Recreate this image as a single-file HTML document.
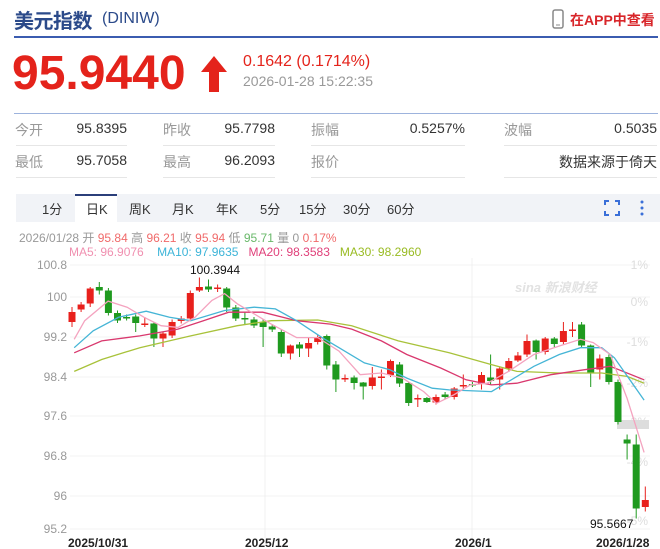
<!DOCTYPE html>
<html><head><meta charset="utf-8"><style>
body{margin:0;width:660px;height:549px;background:#fff;font-family:"Liberation Sans","Noto Sans CJK SC",sans-serif;position:relative;overflow:hidden}
.a{position:absolute;white-space:nowrap}
.ln{position:absolute;height:1px;background:#e6e6e6}
.lb{color:#999;font-size:14px}
.v{color:#333;font-size:14px;text-align:right}
</style></head><body>
<div class="a" style="left:14px;top:5px;font-size:20px;font-weight:bold;color:#2b4a8a;letter-spacing:-0.5px">美元指数</div>
<div class="a" style="left:102px;top:10px;font-size:16px;color:#2b4a8a">(DINIW)</div>
<svg class="a" style="left:552px;top:9px" width="12" height="20"><rect x="1" y="1" width="10" height="18" rx="2" fill="none" stroke="#888" stroke-width="1.5"/><line x1="4" y1="16" x2="8" y2="16" stroke="#888"/></svg>
<div class="a" style="left:570px;top:10px;font-size:14px;font-weight:bold;color:#d8262a">在APP中查看</div>
<div class="a" style="left:14px;top:36px;width:644px;height:2px;background:#3b5cb0"></div>
<div class="a" style="left:12px;top:46px;font-size:48px;font-weight:bold;color:#e4231b">95.9440</div>
<svg class="a" style="left:200px;top:55px" width="28" height="38"><polygon points="14,1 27,17 19,17 19,37 9,37 9,17 1,17" fill="#e4231b"/></svg>
<div class="a" style="left:243px;top:53px;font-size:16px;color:#e4231b">0.1642 (0.1714%)</div>
<div class="a" style="left:243px;top:73px;font-size:14px;color:#999">2026-01-28 15:22:35</div>
<div class="a" style="left:14px;top:113px;width:644px;height:1px;background:#9db3dd"></div>
<div class="a lb" style="left:15px;top:120px">今开</div><div class="a v" style="left:60px;width:67px;top:120px">95.8395</div>
<div class="a lb" style="left:163px;top:120px">昨收</div><div class="a v" style="left:205px;width:70px;top:120px">95.7798</div>
<div class="a lb" style="left:311px;top:120px">振幅</div><div class="a v" style="left:380px;width:85px;top:120px">0.5257%</div>
<div class="a lb" style="left:504px;top:120px">波幅</div><div class="a v" style="left:570px;width:87px;top:120px">0.5035</div>
<div class="ln" style="left:16px;width:111px;top:145px"></div><div class="ln" style="left:163px;width:112px;top:145px"></div><div class="ln" style="left:311px;width:154px;top:145px"></div><div class="ln" style="left:504px;width:153px;top:145px"></div>
<div class="a lb" style="left:15px;top:152px">最低</div><div class="a v" style="left:60px;width:67px;top:152px">95.7058</div>
<div class="a lb" style="left:163px;top:152px">最高</div><div class="a v" style="left:205px;width:70px;top:152px">96.2093</div>
<div class="a lb" style="left:311px;top:152px">报价</div><div class="a v" style="left:520px;width:137px;top:152px">数据来源于倚天</div>
<div class="ln" style="left:16px;width:111px;top:177px"></div><div class="ln" style="left:163px;width:112px;top:177px"></div><div class="ln" style="left:311px;width:154px;top:177px"></div><div class="ln" style="left:504px;width:153px;top:177px"></div>
<div class="a" style="left:16px;top:194px;width:644px;height:28px;background:#f1f3f7"></div>
<div class="a" style="left:75px;top:194px;width:42px;height:28px;background:#fff;border-top:2px solid #2b3f7a;box-sizing:border-box"></div>
<div class="a" style="top:199px;left:0;font-size:13px;color:#333">
<span class="a" style="left:42px">1分</span><span class="a" style="left:86px">日K</span><span class="a" style="left:129px">周K</span><span class="a" style="left:172px">月K</span><span class="a" style="left:216px">年K</span><span class="a" style="left:260px">5分</span><span class="a" style="left:299px">15分</span><span class="a" style="left:343px">30分</span><span class="a" style="left:387px">60分</span></div>
<svg class="a" style="left:604px;top:200px" width="16" height="16" fill="none" stroke="#3a6fd8" stroke-width="2"><path d="M1 5V1h4M11 1h4v4M15 11v4h-4M5 15H1v-4"/></svg>
<svg class="a" style="left:639px;top:199px" width="6" height="18" fill="#3a6fd8"><circle cx="3" cy="3" r="1.5"/><circle cx="3" cy="9" r="1.5"/><circle cx="3" cy="15" r="1.5"/></svg>
<div class="a" style="left:19px;top:229px;font-size:12px;color:#999">2026/01/28 开 <span style="color:#f06a6a">95.84</span> 高 <span style="color:#f06a6a">96.21</span> 收 <span style="color:#f06a6a">95.94</span> 低 <span style="color:#69b86a">95.71</span> 量 0 <span style="color:#f06a6a">0.17%</span></div>
<div class="a" style="left:69px;top:245px;font-size:12px"><span style="color:#f090b0">MA5: 96.9076</span>&nbsp;&nbsp;&nbsp;&nbsp;<span style="color:#3cb4d8">MA10: 97.9635</span>&nbsp;&nbsp;&nbsp;<span style="color:#e0407a">MA20: 98.3583</span>&nbsp;&nbsp;&nbsp;<span style="color:#99bb22">MA30: 98.2960</span></div>
<svg id="c" class="a" style="left:0;top:258px" width="660" height="291"></svg>
<script>
var s=document.getElementById('c'),h='';
function Y(v){return 297+(100-v)*50-258}
var yl=[[100.8,265],[100,297],[99.2,337],[98.4,377],[97.6,416],[96.8,456],[96,496],[95.2,529]];
yl.forEach(function(a){var y=a[1]-258;h+='<line x1="70" x2="650" y1="'+y+'" y2="'+y+'" stroke="#f3f3f3"/><text x="67" y="'+(y+4)+'" text-anchor="end" font-size="12" fill="#999">'+a[0]+'</text>'});
h+='<line x1="265" x2="265" y1="0" y2="280" stroke="#f0f0f0"/><line x1="472" x2="472" y1="0" y2="280" stroke="#f0f0f0"/>';
[['1%',265],['0%',302],['-1%',342],['-2%',383],['-3%',422],['-4%',462],['-5%',521]].forEach(function(a){h+='<text x="648" y="'+(a[1]-258+4)+'" text-anchor="end" font-size="12" fill="#ddd">'+a[0]+'</text>'});
h+='<rect x="617" y="420" width="32" height="9" fill="#ddd" transform="translate(0,-258)"/>';
h+='<text x="515" y="34" font-size="13" font-style="italic" font-weight="bold" fill="#e2e2e2">sina 新浪财经</text>';
var d=[[99.5,99.7,99.8,99.4],[99.75,99.85],[99.87,100.17,100.2,99.8],[100.2,100.13,100.3,100.05],[100.13,99.68],[99.68,99.53],[99.6,99.58],[99.61,99.48,99.65,99.3],[99.46,99.47,99.6,99.4],[99.47,99.17,99.5,99.0],[99.17,99.27,99.3,99.0],[99.23,99.5],[99.52,99.57],[99.57,100.08],[100.13,100.2,100.39,100.1],[100.21,100.15,100.35,100.1],[100.17,100.19,100.25,100.1],[100.17,99.79,100.2,99.7],[99.79,99.57],[99.58,99.56,99.7,99.45],[99.55,99.43],[99.5,99.4,99.55,99.0],[99.41,99.35],[99.3,98.87,99.35,98.8],[98.87,99.03,99.05,98.75],[99.05,98.97,99.1,98.8],[98.97,99.08,99.2,98.8],[99.1,99.2,99.25,99.05],[99.22,98.63,99.25,98.55],[98.65,98.35,98.72,98.1],[98.36,98.38,98.45,98.3],[98.39,98.28,98.43,98.15],[98.29,98.21,98.3,97.95],[98.22,98.39,98.6,98.15],[98.39,98.41,98.55,98.15],[98.44,98.72,98.75,98.4],[98.65,98.27,98.7,98.2],[98.28,97.88,98.3,97.82],[97.96,97.98,98.05,97.8],[97.98,97.9,98.0,97.88],[97.89,98.0,98.05,97.85],[98.05,98.0,98.1,97.95],[98.0,98.17,98.2,97.95],[98.22,98.24,98.45,98.15],[98.26,98.24,98.3,98.2],[98.27,98.44,98.5,98.15],[98.39,98.32,98.85,98.25],[98.35,98.57,98.6,98.15],[98.57,98.72,98.78,98.5],[98.73,98.83,98.9,98.7],[98.85,99.12,99.25,98.8],[99.13,98.9,99.15,98.75],[98.9,99.17,99.2,98.85],[99.17,99.06,99.2,99.0],[99.1,99.32,99.5,99.05],[99.33,99.35,99.5,99.2],[99.45,99.03,99.5,99.0],[99.03,98.47,99.05,98.2],[98.55,98.77,98.85,98.35],[98.8,98.3,98.85,98.25],[98.3,97.5,98.35,97.45],[97.15,97.07,97.25,96.75],[97.05,95.77,97.25,95.57],[95.8,95.94,96.21,95.71]];
d.forEach(function(c,i){var o=c[0],cl=c[1],hi=c[2]||Math.max(o,cl)+0.05,lo=c[3]||Math.min(o,cl)-0.05;var col=cl>=o?'#e8201c':'#1f9a1f';var x=72+i*9.1;var t=Y(Math.max(o,cl)),b=Y(Math.min(o,cl));if(b-t<1.5)b=t+1.5;
h+='<line x1="'+x+'" x2="'+x+'" y1="'+Y(hi)+'" y2="'+Y(lo)+'" stroke="'+col+'"/><rect x="'+(x-3.5)+'" y="'+t+'" width="7" height="'+(b-t)+'" fill="'+col+'"/>'});
function P(a,col){var p=[];for(var i=0;i<a.length;i+=2)p.push((a[i]/2.36).toFixed(1)+','+(270+a[i+1]/2.96-258).toFixed(1));h+='<polyline points="'+p.join(' ')+'" fill="none" stroke="'+col+'" stroke-width="1.3"/>'}
P([175,300,240,265,330,230,450,195,560,165,640,150,750,148,830,165,940,210,1060,245,1160,280,1220,300,1320,305,1420,305,1480,315,1520,335],'#a8c23a');
P([175,245,240,210,330,195,420,175,480,150,540,125,620,125,700,150,780,160,830,175,900,210,960,250,1040,290,1100,325,1160,340,1220,335,1300,310,1380,295,1440,285,1520,325],'#d9386e');
P([175,230,220,180,280,140,345,122,400,140,450,150,530,120,600,110,650,115,700,150,760,200,800,230,860,275,920,295,960,320,1020,350,1060,355,1160,360,1200,330,1260,285,1320,250,1370,230,1420,230,1450,260,1520,385],'#45b5d6');
P([175,205,200,150,255,92,300,110,340,140,380,165,420,170,460,140,500,90,530,70,560,100,600,130,640,160,700,200,750,200,800,240,850,310,900,305,950,320,1000,360,1030,395,1070,370,1110,340,1150,335,1200,300,1260,250,1320,225,1370,205,1400,215,1440,250,1480,380,1520,540],'#f4a3bf');
h+='<text x="190" y="16" font-size="12" fill="#111">100.3944</text><text x="590" y="270" font-size="12" fill="#111">95.5667</text>';
h+='<text x="68" y="289" font-size="12" font-weight="bold" fill="#222">2025/10/31</text><text x="245" y="289" font-size="12" font-weight="bold" fill="#222">2025/12</text><text x="455" y="289" font-size="12" font-weight="bold" fill="#222">2026/1</text><text x="596" y="289" font-size="12" font-weight="bold" fill="#222">2026/1/28</text>';
s.innerHTML=h;
</script>
</body></html>
